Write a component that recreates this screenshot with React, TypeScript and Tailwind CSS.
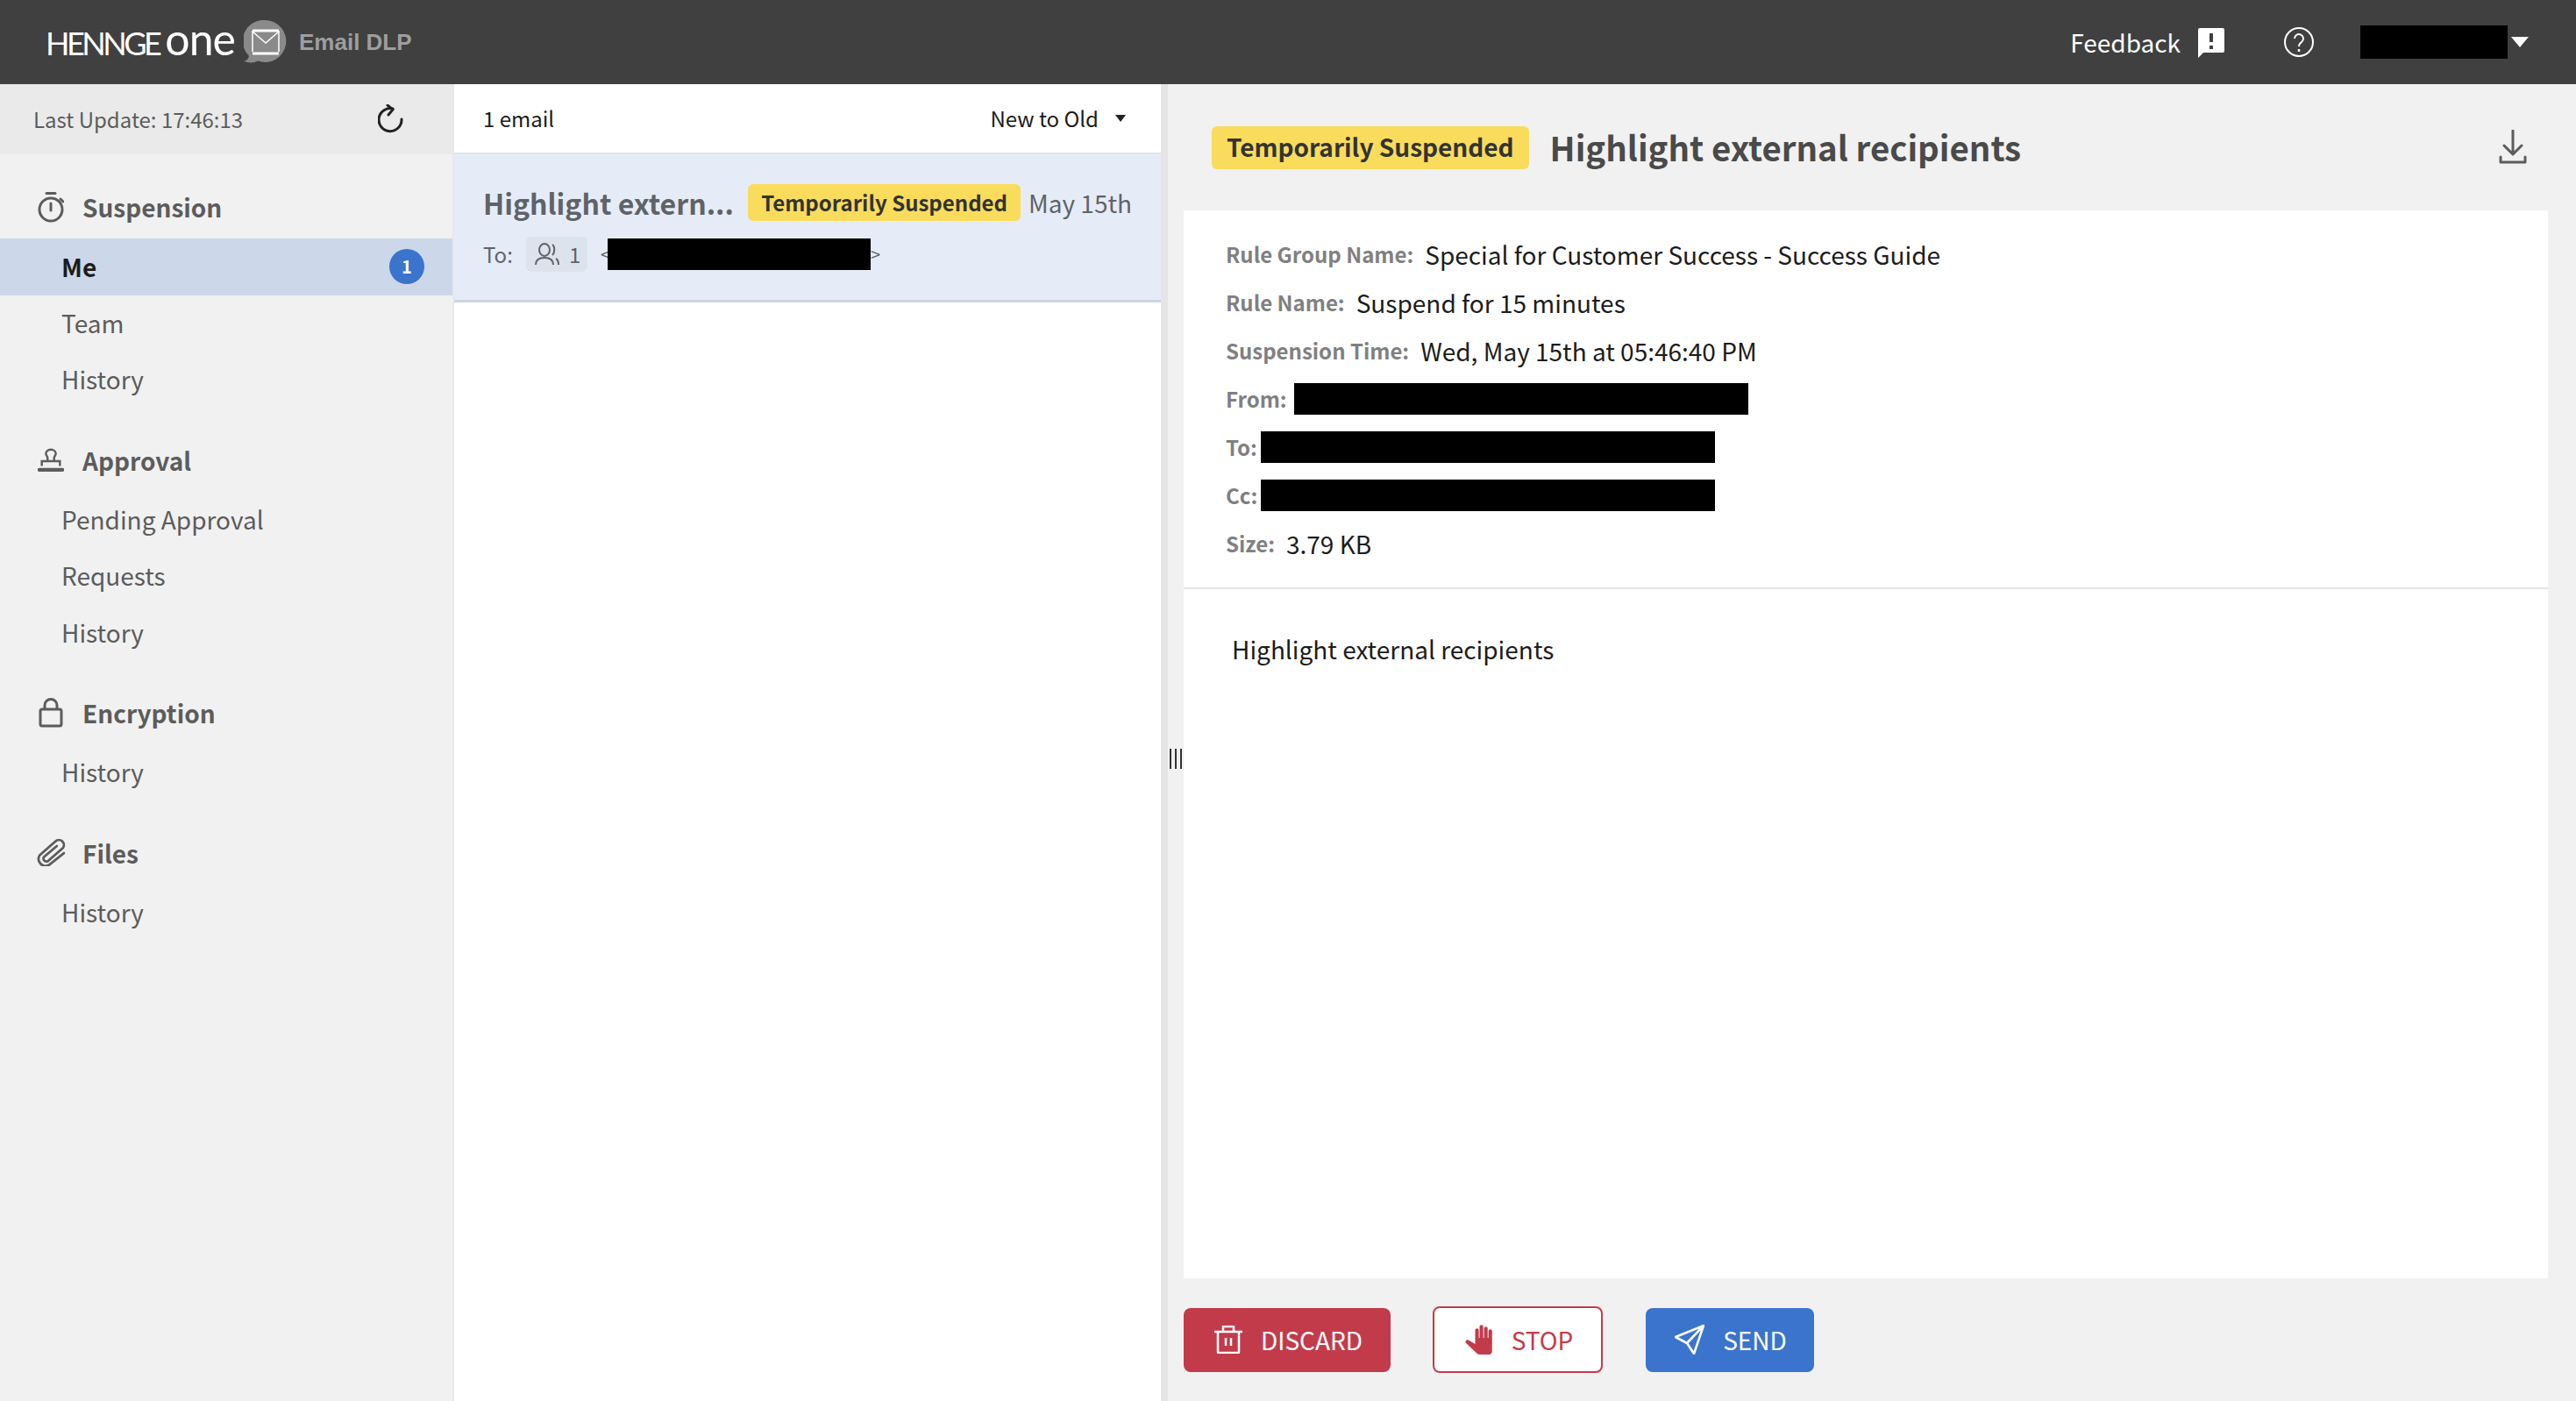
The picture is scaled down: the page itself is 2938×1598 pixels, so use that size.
const font = "font-['Noto_Sans_CJK_JP','Noto_Sans',sans-serif]";

const navGroups = [
  { title: "Suspension", icon: <TimerIcon />, items: ["Me", "Team", "History"] },
  { title: "Approval", icon: <StampIcon />, items: ["Pending Approval", "Requests", "History"] },
  { title: "Encryption", icon: <LockIcon />, items: ["History"] },
  { title: "Files", icon: <ClipIcon />, items: ["History"] },
];

const details = [
  { label: "Rule Group Name:", value: "Special for Customer Success - Success Guide" },
  { label: "Rule Name:", value: "Suspend for 15 minutes" },
  { label: "Suspension Time:", value: "Wed, May 15th at 05:46:40 PM" },
  { label: "From:", bar: "ml-[8px]" },
  { label: "To:", bar: "ml-[4px]" },
  { label: "Cc:", bar: "ml-[4px]" },
  { label: "Size:", value: "3.79 KB" },
];

function TimerIcon() {
  return (
    <svg viewBox="0 0 30 36" className="w-[30px] h-[36px]" fill="none" stroke="#5c5c5c" strokeWidth="3">
      <circle cx="15" cy="21" r="13" />
      <path d="M10 2.500h10M15 14v8M26 9l3 3" strokeLinecap="round" />
    </svg>
  );
}

function StampIcon() {
  return (
    <svg viewBox="0 0 32 28" className="w-[32px] h-[28px]" fill="none" stroke="#5c5c5c" strokeWidth="2.600">
      <path d="M12 15v-4C12 9 10 8 10 6a6 5 0 0 1 12 0c0 2-2 3-2 5v4M5 21v-6h22v6" />
      <path d="M2 25.500h28" strokeWidth="4.500" strokeLinecap="round" />
    </svg>
  );
}

function LockIcon() {
  return (
    <svg viewBox="0 0 28 34" className="w-[28px] h-[34px]" fill="none" stroke="#5c5c5c" strokeWidth="3">
      <rect x="2" y="13" width="24" height="19" rx="2" />
      <path d="M7 13V8.500a7 7 0 0 1 14 0V13" />
    </svg>
  );
}

function ClipIcon() {
  return (
    <svg viewBox="3 2 27 27" className="w-[33px] h-[31px] shrink-0" fill="none" stroke="#5c5c5c" strokeWidth="2.400" strokeLinecap="round">
      <path d="M22 9 9 20a3 3 0 0 0 4 4L28 11a5 5 0 0 0-7-7L5 18a7 7 0 0 0 9 10L29 16" />
    </svg>
  );
}

function Redacted({ className }: { className: string }) {
  return <div className={`bg-black ${className}`} />;
}

export default function App() {
  return (
    <div className={`h-screen w-full flex flex-col overflow-hidden bg-[#f1f1f1] ${font}`}>
      {/* top bar */}
      <header className="h-[96px] shrink-0 bg-[#404040] flex items-center pl-[52px] pr-[54px] text-white">
        <div className="flex items-baseline font-['Lato',sans-serif] leading-none -mt-[8px]">
          <span className="text-[36px] tracking-[-3.500px]">HENNGE</span>
          <span className="ml-[7px] text-[50px] tracking-[-1px]">one</span>
        </div>
        <svg viewBox="0 0 50 50" className="w-[50px] h-[50px] ml-[10px]">
          <path d="M25 0a24 24 0 1 1-9 46.500C12 49 6 49 0 47c4-1 5-3 6-6A24 24 0 0 1 25 0Z" fill="#8a8a8a" />
          <path d="M10 12v24M40 12v24M10 13l15 13 15-13" fill="none" stroke="#fff" strokeWidth="1.500" />
          <path d="M10 12h30M10 38h30" fill="none" stroke="#fff" strokeWidth="3" />
        </svg>
        <span className="ml-[13px] font-['Liberation_Sans',sans-serif] font-bold text-[26px] text-[#9e9e9e]">Email DLP</span>
        <div className="ml-auto flex items-center">
          <span className="text-[28px]">Feedback</span>
          <svg viewBox="0 0 30 34" className="w-[30px] h-[34px] ml-[20px] mt-[2px]">
            <path d="M2 0h26a2 2 0 0 1 2 2v24a2 2 0 0 1-2 2H6l-6 6V2a2 2 0 0 1 2-2Z" fill="#fff" />
            <path d="M15 6v10M15 20v4" stroke="#404040" strokeWidth="4" />
          </svg>
          <svg viewBox="0 0 34 34" className="w-[34px] h-[34px] ml-[68px]" fill="none" stroke="#fff" strokeWidth="2">
            <circle cx="17" cy="17" r="16" />
            <path d="M12 13a5 5 0 1 1 8 4c-2 1.500-3 2.500-3 5" />
            <path d="M17 25v3" strokeWidth="2.500" />
          </svg>
          <Redacted className="w-[168px] h-[38px] ml-[53px]" />
          <div className="ml-[4px] w-0 h-0 border-x-[10px] border-x-transparent border-t-[12px] border-t-white" />
        </div>
      </header>

      <div className="flex-1 flex min-h-0">
        {/* sidebar */}
        <aside className="w-[518px] shrink-0 border-r-2 border-[#e8e8e8] text-[#5c5c5c]">
          <div className="h-[80px] bg-[#eaeaea] flex items-center justify-between pl-[38px] pr-[55px] text-[24px]">
            <span>Last Update: 17:46:13</span>
            <svg viewBox="0 0 30 34" className="w-[30px] h-[34px]" fill="none" stroke="#222" strokeWidth="3" strokeLinecap="round">
              <path d="M27 17a13 13 0 1 1-10-12" />
              <path d="M11 1l6 5-5 6" />
            </svg>
          </div>
          <nav className="pt-[31px]">
            {navGroups.map((group) => (
              <div key={group.title} className="mb-[30px]">
                <div className="h-[58px] mb-[7px] flex items-center pl-[43px]">
                  <span className="w-[30px] flex justify-center">{group.icon}</span>
                  <span className="ml-[21px] text-[28px] font-semibold">{group.title}</span>
                </div>
                {group.items.map((item) =>
                  item === "Me" ? (
                    <div key={item} className="h-[64.500px] bg-[#ccd7ea] flex items-center justify-between pl-[70px] pr-[32px] text-[28px] font-semibold text-[#1c1c1c]">
                      {item}
                      <span className="w-[40px] h-[40px] rounded-full bg-[#3a74cd] text-white text-[20px] font-bold flex items-center justify-center">1</span>
                    </div>
                  ) : (
                    <div key={item} className="h-[64.500px] pb-[2px] flex items-center pl-[70px] text-[28px]">{item}</div>
                  ),
                )}
              </div>
            ))}
          </nav>
        </aside>

        {/* mail list */}
        <section className="w-[806px] shrink-0 bg-white">
          <div className="h-[80px] border-b-2 border-[#e3e3e3] flex items-center pl-[33px] pr-[40px] text-[24px] text-[#1c1c1c]">
            <span>1 email</span>
            <span className="ml-auto">New to Old</span>
            <div className="ml-[19px] w-0 h-0 border-x-[6px] border-x-transparent border-t-[8px] border-t-[#222]" />
          </div>
          <div className="h-[169px] bg-[#e6ecf7] border-b-[3px] border-[#ccd3e2] pl-[33px] pr-[33px] pt-[34px] text-[#5f6368]">
            <div className="flex items-center h-[42px]">
              <span className="w-[306px] text-[32px] font-semibold whitespace-nowrap">Highlight extern...</span>
              <span className="h-[42px] px-[15px] rounded-[6px] bg-[#f9dc5c] text-[#333] text-[24px] font-semibold flex items-center whitespace-nowrap">Temporarily Suspended</span>
              <span className="ml-[9px] text-[28px] whitespace-nowrap">May 15th</span>
            </div>
            <div className="flex items-center mt-[18px] text-[24px]">
              <span className="w-[49px]">To:</span>
              <span className="w-[70px] h-[40px] rounded-[6px] bg-[#dde3ec] flex items-center pl-[10px] gap-[11px]">
                <svg viewBox="0 0 28 26" className="w-[28px] h-[26px]" fill="none" stroke="#5f6368" strokeWidth="2">
                  <ellipse cx="11" cy="8" rx="6" ry="7" />
                  <path d="M1 25c0-6 4-8 10-8s10 2 10 8M20 2c3 2 3 9 0 12M24 18c2 1 3 3 3 7" />
                </svg>
                1
              </span>
              <span className="ml-[15px] text-[20px]">&lt;</span>
              <Redacted className="w-[300px] h-[36px] -ml-[3px]" />
              <span className="text-[20px]">&gt;</span>
            </div>
          </div>
        </section>

        {/* splitter */}
        <div className="w-[8px] shrink-0 bg-[#e5e5e5]" />
        <div className="w-[18px] shrink-0 flex items-center pl-[2px] pt-[36px]">
          <div className="flex gap-[4px]">
            <span className="w-[2px] h-[23px] bg-[#333]" />
            <span className="w-[2px] h-[23px] bg-[#333]" />
            <span className="w-[2px] h-[23px] bg-[#333]" />
          </div>
        </div>

        {/* detail */}
        <main className="flex-1 min-w-0 flex flex-col pr-[32px]">
          <div className="h-[144px] shrink-0 flex items-center pl-[32px] pr-[24px]">
            <span className="h-[49px] pb-[2px] px-[17px] rounded-[6px] bg-[#f9dc5c] text-[#333] text-[28px] font-semibold flex items-center">Temporarily Suspended</span>
            <h1 className="ml-[24px] -mt-[1px] text-[38.400px] font-semibold text-[#4a4a4a]">Highlight external recipients</h1>
            <svg viewBox="0 0 32 40" className="ml-auto w-[32px] h-[40px]" fill="none" stroke="#5c5c5c" strokeWidth="3" strokeLinecap="round" strokeLinejoin="round">
              <path d="M16 1v26M6 18l10 10 10-10M2 31v6h28v-6" />
            </svg>
          </div>
          <div className="flex-1 min-h-0 bg-white flex flex-col">
            <div className="h-[432px] shrink-0 border-b-2 border-[#e5e5e5] pt-[22px] pl-[48px]">
              {details.map((row) => (
                <div key={row.label} className="h-[55px] flex items-center">
                  <span className="text-[24px] font-semibold text-[#808080] whitespace-nowrap">{row.label}</span>
                  {row.value ? (
                    <span className="ml-[13px] text-[28px] text-[#1c1c1c] whitespace-nowrap">{row.value}</span>
                  ) : (
                    <Redacted className={`h-[36px] w-[518px] ${row.bar}`} />
                  )}
                </div>
              ))}
            </div>
            <p className="pl-[55px] pt-[47px] text-[28px] text-[#1c1c1c]">Highlight external recipients</p>
          </div>
          <div className="h-[140px] shrink-0 flex items-center gap-[48px]">
            <button className="w-[236px] h-[73px] pl-[3px] rounded-[8px] bg-[#c23b4b] text-white text-[28px] flex items-center justify-center gap-[21px]">
              <svg viewBox="0 0 32 32" className="w-[32px] h-[32px]" fill="none" stroke="#fff" strokeWidth="2.500">
                <path d="M0 7h32M4 7v23a1 1 0 0 0 1 1h22a1 1 0 0 0 1-1V7M10 7V1h12v6" />
                <path d="M13 14v9M19 14v9" />
              </svg>
              DISCARD
            </button>
            <button className="w-[194px] h-[76px] pl-[3px] rounded-[8px] bg-white border-[2px] border-[#c23b4b] text-[#c23b4b] text-[28px] flex items-center justify-center gap-[22px]">
              <svg viewBox="0 0 27 34" className="w-[31px] h-[34px]" fill="#c23b4b" preserveAspectRatio="none">
                <path d="M10 6a1.800 1.800 0 0 1 3.600 0v9h.8V2a1.800 1.800 0 0 1 3.600 0v13h.8V4a1.800 1.800 0 0 1 3.600 0v11h.8V7a1.800 1.800 0 0 1 3.600 0v23c0 2-1 4-3 4H15c-2 0-3-1-4-2L1 21c-2-2 1-5 3-3l6 4Z" />
              </svg>
              STOP
            </button>
            <button className="w-[192px] h-[73px] ml-[1px] pl-[2px] rounded-[8px] bg-[#3a74cd] text-white text-[28px] flex items-center justify-center gap-[21px]">
              <svg viewBox="0 0 34 34" className="w-[34px] h-[34px]" fill="none" stroke="#fff" strokeWidth="2.600" strokeLinejoin="round">
                <path d="M33 1 1 14l13 7 8 12L33 1ZM33 1 14 21" />
              </svg>
              SEND
            </button>
          </div>
        </main>
      </div>
    </div>
  );
}
